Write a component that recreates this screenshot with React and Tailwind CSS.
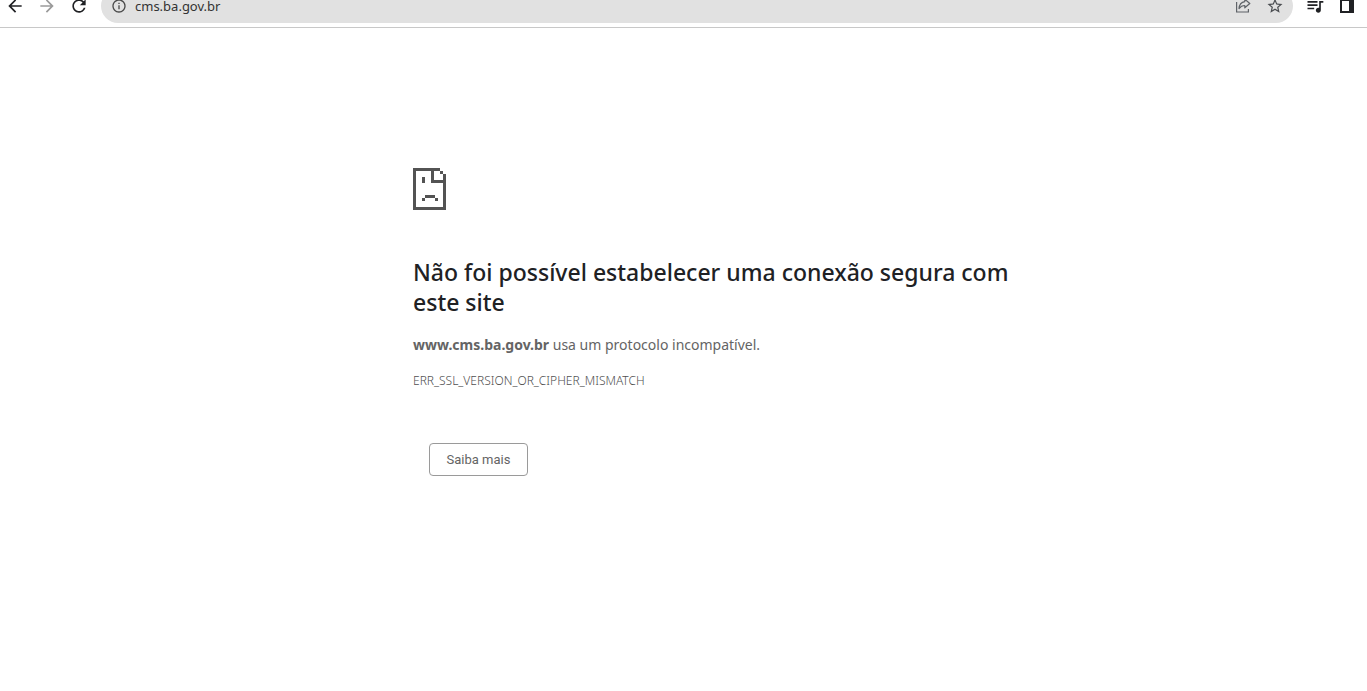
import React from 'react'
import { MdArrowBack, MdArrowForward, MdRefresh, MdInfoOutline, MdStarBorder, MdQueueMusic } from 'react-icons/md'

const ShareIcon = () => (
  <svg viewBox="0 0 16 16" className="w-4 h-4" fill="none" stroke="currentColor" strokeWidth="1.2">
    <path d="M1.6 4v10h11.800v-3" />
    <path d="M9.800 1.200l5 4.300-5 4.300V7.500C7.200 7.500 5.500 8.500 4 10.600c.3-4 2.500-6.500 5.800-7z" strokeLinejoin="round" />
  </svg>
)

const SidePanelIcon = () => (
  <svg viewBox="0 0 14 14" className="w-3.5 h-3.5" fill="currentColor">
    <path fillRule="evenodd" d="M0 0h14v14H0zM2 2v10h7V2z" />
  </svg>
)

// pixel art page, cells of 3px
const SadPage = () => (
  <svg viewBox="0 0 33 42" className="w-[33px] h-[42px]" fill="#535353" shapeRendering="crispEdges">
    <path d="M0 0h27v3h-6v9h9V6h3v36H0zM3 3v36h27V15H18V3z" fillRule="evenodd" />
    <path d="M27 3h3v3h-3zM9 9h3v6H9zM12 27h10v3H12zM9 30h3v3H9zM22 30h3v3h-3z" />
  </svg>
)

const Toolbar = () => {
  return (
    <header className="h-7 overflow-hidden flex items-end pb-1 border-b border-[#c8c8c8] text-[#202124]">
      <div className="flex gap-0.5 shrink-0">
        <button aria-label="Voltar" className="w-[30px] h-[34px] flex items-center justify-center">
          <MdArrowBack className="w-5 h-5" />
        </button>
        <button aria-label="Avançar" className="w-[30px] h-[34px] flex items-center justify-center text-[#9a9a9a]">
          <MdArrowForward className="w-5 h-5" />
        </button>
        <button aria-label="Recarregar" className="w-[30px] h-[34px] flex items-center justify-center">
          <MdRefresh className="w-5 h-5" />
        </button>
      </div>

      <div className="flex-1 min-w-0 h-[34px] ml-[7px] pl-2.5 pr-2 flex items-center rounded-full bg-[#e1e1e1]">
        <MdInfoOutline className="w-4 h-4 shrink-0 text-[#4a4a4a]" />
        <input
          aria-label="Endereço"
          defaultValue="cms.ba.gov.br"
          className="flex-1 min-w-0 ml-2 bg-transparent outline-none text-[13px] leading-4 text-[#333]"
        />
        <button aria-label="Compartilhar" className="w-5 flex justify-center text-[#5f6368]">
          <ShareIcon />
        </button>
        <button aria-label="Favoritos" className="w-5 ml-3 flex justify-center text-[#4a4d51]">
          <MdStarBorder className="w-[18px] h-[18px]" />
        </button>
      </div>

      <div className="flex gap-0.5 ml-[7px] mr-[5px] shrink-0">
        <button aria-label="Mídia" className="w-[30px] h-[34px] flex items-center justify-center">
          <MdQueueMusic className="w-5 h-5" />
        </button>
        <button aria-label="Painel lateral" className="w-[30px] h-[34px] flex items-center justify-center">
          <SidePanelIcon />
        </button>
      </div>
    </header>
  )
}

const App = () => {
  return (
    <div className="min-h-screen bg-white font-['Noto_Sans',sans-serif]">
      <Toolbar />
      <main className="max-w-[661px] mx-auto pl-[60px] pt-[140px] text-[#646464]">
        <SadPage />
        <h1 className="mt-[47px] text-[23px] leading-[30px] font-medium text-[#202124]">
          Não foi possível estabelecer uma conexão segura com este site
        </h1>
        <p className="mt-4 text-[14px] leading-6">
          <strong>www.cms.ba.gov.br</strong> usa um protocolo incompatível.
        </p>
        <p className="mt-3 text-[12px] leading-6 font-light text-[#505050]">ERR_SSL_VERSION_OR_CIPHER_MISMATCH</p>
        <button className="mt-[50px] ml-4 w-[99px] h-[33px] border border-[#9a9a9a] rounded text-[13px] font-['Roboto',sans-serif]">
          Saiba mais
        </button>
      </main>
    </div>
  )
}

export default App
